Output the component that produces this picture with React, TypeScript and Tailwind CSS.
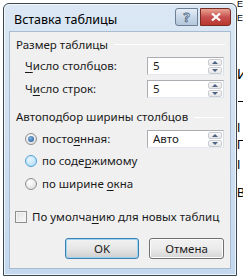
import React from 'react'

// Win7-style "Вставка таблицы" dialog, sitting over a document

function Accel({ text, at }: { text: string; at: number }) {
  return (
    <>
      {text.slice(0, at)}
      <span className="underline underline-offset-2 decoration-[1px]">{text[at]}</span>
      {text.slice(at + 1)}
    </>
  )
}

function Spin({ value }: { value: string }) {
  return (
    <div className="ml-auto w-[77px] h-full flex items-center bg-white border border-[#abadb3] border-b-[#e3e9ef] border-r-[#dbdfe6]">
      <span className="pl-[5px] flex-1 leading-none">{value}</span>
      <div className="flex flex-col gap-[1px] mr-[1px] w-[14px] h-[15px]">
        <div className="flex-1 flex items-center justify-center border border-[#c9ccd2] rounded-[2px] bg-gradient-to-b from-[#f8f8f8] to-[#e6e6e6]">
          <svg width="6" height="3" viewBox="0 0 6 3"><path d="M0 3L3 0L6 3Z" fill="#4d6185" /></svg>
        </div>
        <div className="flex-1 flex items-center justify-center border border-[#c9ccd2] rounded-[2px] bg-gradient-to-b from-[#f8f8f8] to-[#e6e6e6]">
          <svg width="6" height="3" viewBox="0 0 6 3"><path d="M0 0L3 3L6 0Z" fill="#4d6185" /></svg>
        </div>
      </div>
    </div>
  )
}

function Radio({ state }: { state: 'on' | 'hover' | 'off' }) {
  const ring =
    state === 'hover'
      ? 'border-[#4ea1d8] bg-[radial-gradient(circle_at_40%_35%,#e8f6fe,#a8d8f5)]'
      : 'border-[#8e8f8f] bg-[radial-gradient(circle_at_40%_35%,#ffffff,#d6d6d6)]'
  return (
    <span className={`w-[12px] h-[12px] rounded-full border flex items-center justify-center ${ring}`}>
      {state === 'on' && <span className="w-[6px] h-[6px] rounded-full bg-[radial-gradient(circle_at_40%_35%,#7fb6e3,#1b4e8c)]" />}
    </span>
  )
}

function GroupTitle({ label, h }: { label: string; h: string }) {
  return (
    <div className={`flex items-center pl-[6px] pr-[5px] ${h}`}>
      <span>{label}</span>
      <div className="flex-1 ml-[6px] h-px bg-[#dcdcdc] border-b border-white" />
    </div>
  )
}

export default function App() {
  return (
    <div className="relative w-[243px] h-[279px] bg-white overflow-hidden font-['Noto_Sans',sans-serif] text-[11.5px] text-[#1a1a1a]">
      {/* document text peeking out behind the dialog */}
      <div className="absolute left-[237px] top-0 w-[6px] h-full overflow-hidden text-black font-['Liberation_Sans',sans-serif]">
        <span className="absolute top-[0px] text-[9px] leading-none">E</span>
        <span className="absolute top-[14px] text-[9px] leading-none">E</span>
        <span className="absolute top-[66px] text-[15px] leading-none">И</span>
        <span className="absolute top-[101px] left-[1px] w-[6px] h-px bg-black" />
        <span className="absolute top-[122px] text-[12px] leading-none">I</span>
        <span className="absolute top-[139px] text-[12px] leading-none">Г</span>
        <span className="absolute top-[159px] text-[12px] leading-none">I</span>
        <span className="absolute top-[187px] text-[12px] leading-none">В</span>
      </div>

      <div className="relative ml-[3px] mt-[3px] w-[234px] h-[273px] border border-[#3d4752] rounded-t-[6px] bg-gradient-to-b from-[#dbe7f4] to-[#c3d8ee] shadow-[inset_0_0_0_1px_rgba(255,255,255,0.7)] flex flex-col">
        {/* title bar */}
        <div className="h-[27px] flex items-start pl-[10px] pr-[5px]">
          <span className="mt-[8px] leading-[16px] text-[12.5px] text-black">Вставка таблицы</span>
          <div className="ml-auto mt-[4px] flex gap-[2px]">
            <div className="w-[23px] h-[18px] rounded-l-[3px] border border-[#6d7f94] bg-gradient-to-b from-[#e6eef7] via-[#c9d8e8] to-[#b3c6db] flex items-center justify-center text-[13px] font-bold text-[#e9eff6] [-webkit-text-stroke:0.8px_#4f6683] leading-none">
              ?
            </div>
            <div className="w-[31px] h-[18px] rounded-r-[3px] border border-[#7a2b24] bg-gradient-to-b from-[#e8a493] via-[#c75050] to-[#b8382c] flex items-center justify-center">
              <svg width="10" height="8" viewBox="0 0 10 8">
                <path d="M1 0.5L9 7.5M9 0.5L1 7.5" stroke="#fff" strokeWidth="2.2" />
              </svg>
            </div>
          </div>
        </div>

        {/* client area */}
        <div className="mx-[5px] h-[238px] bg-[#f0f0f0] border border-[#a9bbd0] flex flex-col">
          <GroupTitle label="Размер таблицы" h="h-[25px]" />

          <div className="h-[18px] flex items-center pl-[15px] pr-[6px]">
            <span><Accel text="Число столбцов:" at={0} /></span>
            <Spin value="5" />
          </div>
          <div className="mt-[5px] h-[18px] flex items-center pl-[15px] pr-[6px]">
            <span><Accel text="Число строк:" at={1} /></span>
            <Spin value="5" />
          </div>

          <GroupTitle label="Автоподбор ширины столбцов" h="mt-[9px] h-[20px]" />

          <div className="mt-[3px] h-[18px] flex items-center pl-[15px] pr-[6px]">
            <Radio state="on" />
            <span className="ml-[5px]"><Accel text="постоянная:" at={5} /></span>
            <Spin value="Авто" />
          </div>
          <div className="mt-[4px] h-[18px] flex items-center pl-[15px]">
            <Radio state="hover" />
            <span className="ml-[5px]"><Accel text="по содержимому" at={7} /></span>
          </div>
          <div className="mt-[5px] h-[18px] flex items-center pl-[15px]">
            <Radio state="off" />
            <span className="ml-[5px]"><Accel text="по ширине окна" at={10} /></span>
          </div>

          <div className="mt-[15px] h-[18px] flex items-center pl-[5px]">
            <span className="w-[12px] h-[12px] border border-[#8e8f8f] bg-gradient-to-br from-[#e0e0e0] to-[#fafafa] shadow-[inset_0_0_0_1px_#f4f4f4]" />
            <span className="ml-[5px]"><Accel text="По умолчанию для новых таблиц" at={9} /></span>
          </div>

          <div className="mt-[12px] flex gap-[10px] pl-[55px]">
            <button className="w-[74px] h-[21px] rounded-[3px] border border-[#3c7fb1] bg-gradient-to-b from-[#f2f2f2] via-[#e6e6e6] to-[#cfcfcf] shadow-[inset_0_0_0_1px_#9ed4f2] leading-none text-[#1a1a1a]">
              OK
            </button>
            <button className="w-[75px] h-[21px] rounded-[3px] border border-[#707070] bg-gradient-to-b from-[#f2f2f2] via-[#ebebeb] to-[#d5d5d5] shadow-[inset_0_0_0_1px_#fcfcfc] leading-none text-[#1a1a1a]">
              Отмена
            </button>
          </div>
        </div>
      </div>
    </div>
  )
}
